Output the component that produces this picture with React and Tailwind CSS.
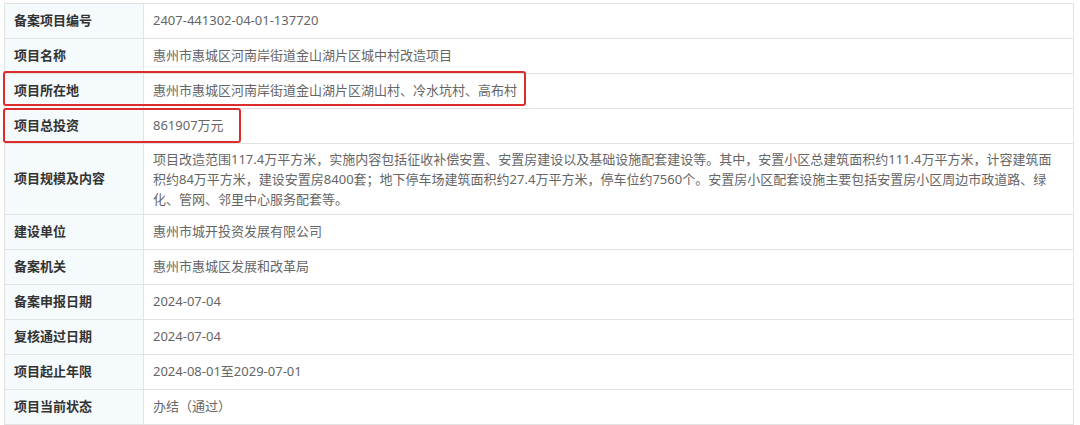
import React from "react";

const rows = [
  ["备案项目编号", "2407-441302-04-01-137720"],
  ["项目名称", "惠州市惠城区河南岸街道金山湖片区城中村改造项目"],
  ["项目所在地", "惠州市惠城区河南岸街道金山湖片区湖山村、冷水坑村、高布村"],
  ["项目总投资", "861907万元"],
  [
    "项目规模及内容",
    "项目改造范围117.4万平方米，实施内容包括征收补偿安置、安置房建设以及基础设施配套建设等。其中，安置小区总建筑面积约111.4万平方米，计容建筑面积约84万平方米，建设安置房8400套；地下停车场建筑面积约27.4万平方米，停车位约7560个。安置房小区配套设施主要包括安置房小区周边市政道路、绿化、管网、邻里中心服务配套等。",
  ],
  ["建设单位", "惠州市城开投资发展有限公司"],
  ["备案机关", "惠州市惠城区发展和改革局"],
  ["备案申报日期", "2024-07-04"],
  ["复核通过日期", "2024-07-04"],
  ["项目起止年限", "2024-08-01至2029-07-01"],
  ["项目当前状态", "办结（通过）"],
];

export default function App() {
  return (
    <div
      className="relative h-[425px] w-[1080px] overflow-hidden bg-white pl-[4px] pt-[3px] text-[13px]"
      style={{ fontFamily: '"Noto Sans", "Noto Sans CJK SC", sans-serif' }}
    >
      <div className="w-[1070px] border-t border-l border-r border-[#e3e3e3]">
        {rows.map(([label, value], i) => (
          <div key={label} className="flex border-b border-[#e3e3e3]">
            <div className="flex w-[139px] shrink-0 items-center border-r border-[#e3e3e3] bg-[#f5fafd] pl-[9px] font-bold text-[#333]">
              {label}
            </div>
            <div
              className={
                i === 4
                  ? "flex-1 py-[5px] pl-[9px] pr-[14px] leading-[20px] text-[#666]"
                  : "flex h-[34px] flex-1 items-center pl-[9px] text-[#666]"
              }
            >
              {value}
            </div>
          </div>
        ))}
      </div>

      {/* red highlight boxes drawn over the table */}
      <div className="absolute left-[3px] top-[71px] h-[35px] w-[523px] rounded-[3px] border-2 border-[#dd2c2c]" />
      <div className="absolute left-[3px] top-[108px] h-[35px] w-[238px] rounded-[3px] border-2 border-[#dd2c2c]" />
    </div>
  );
}
